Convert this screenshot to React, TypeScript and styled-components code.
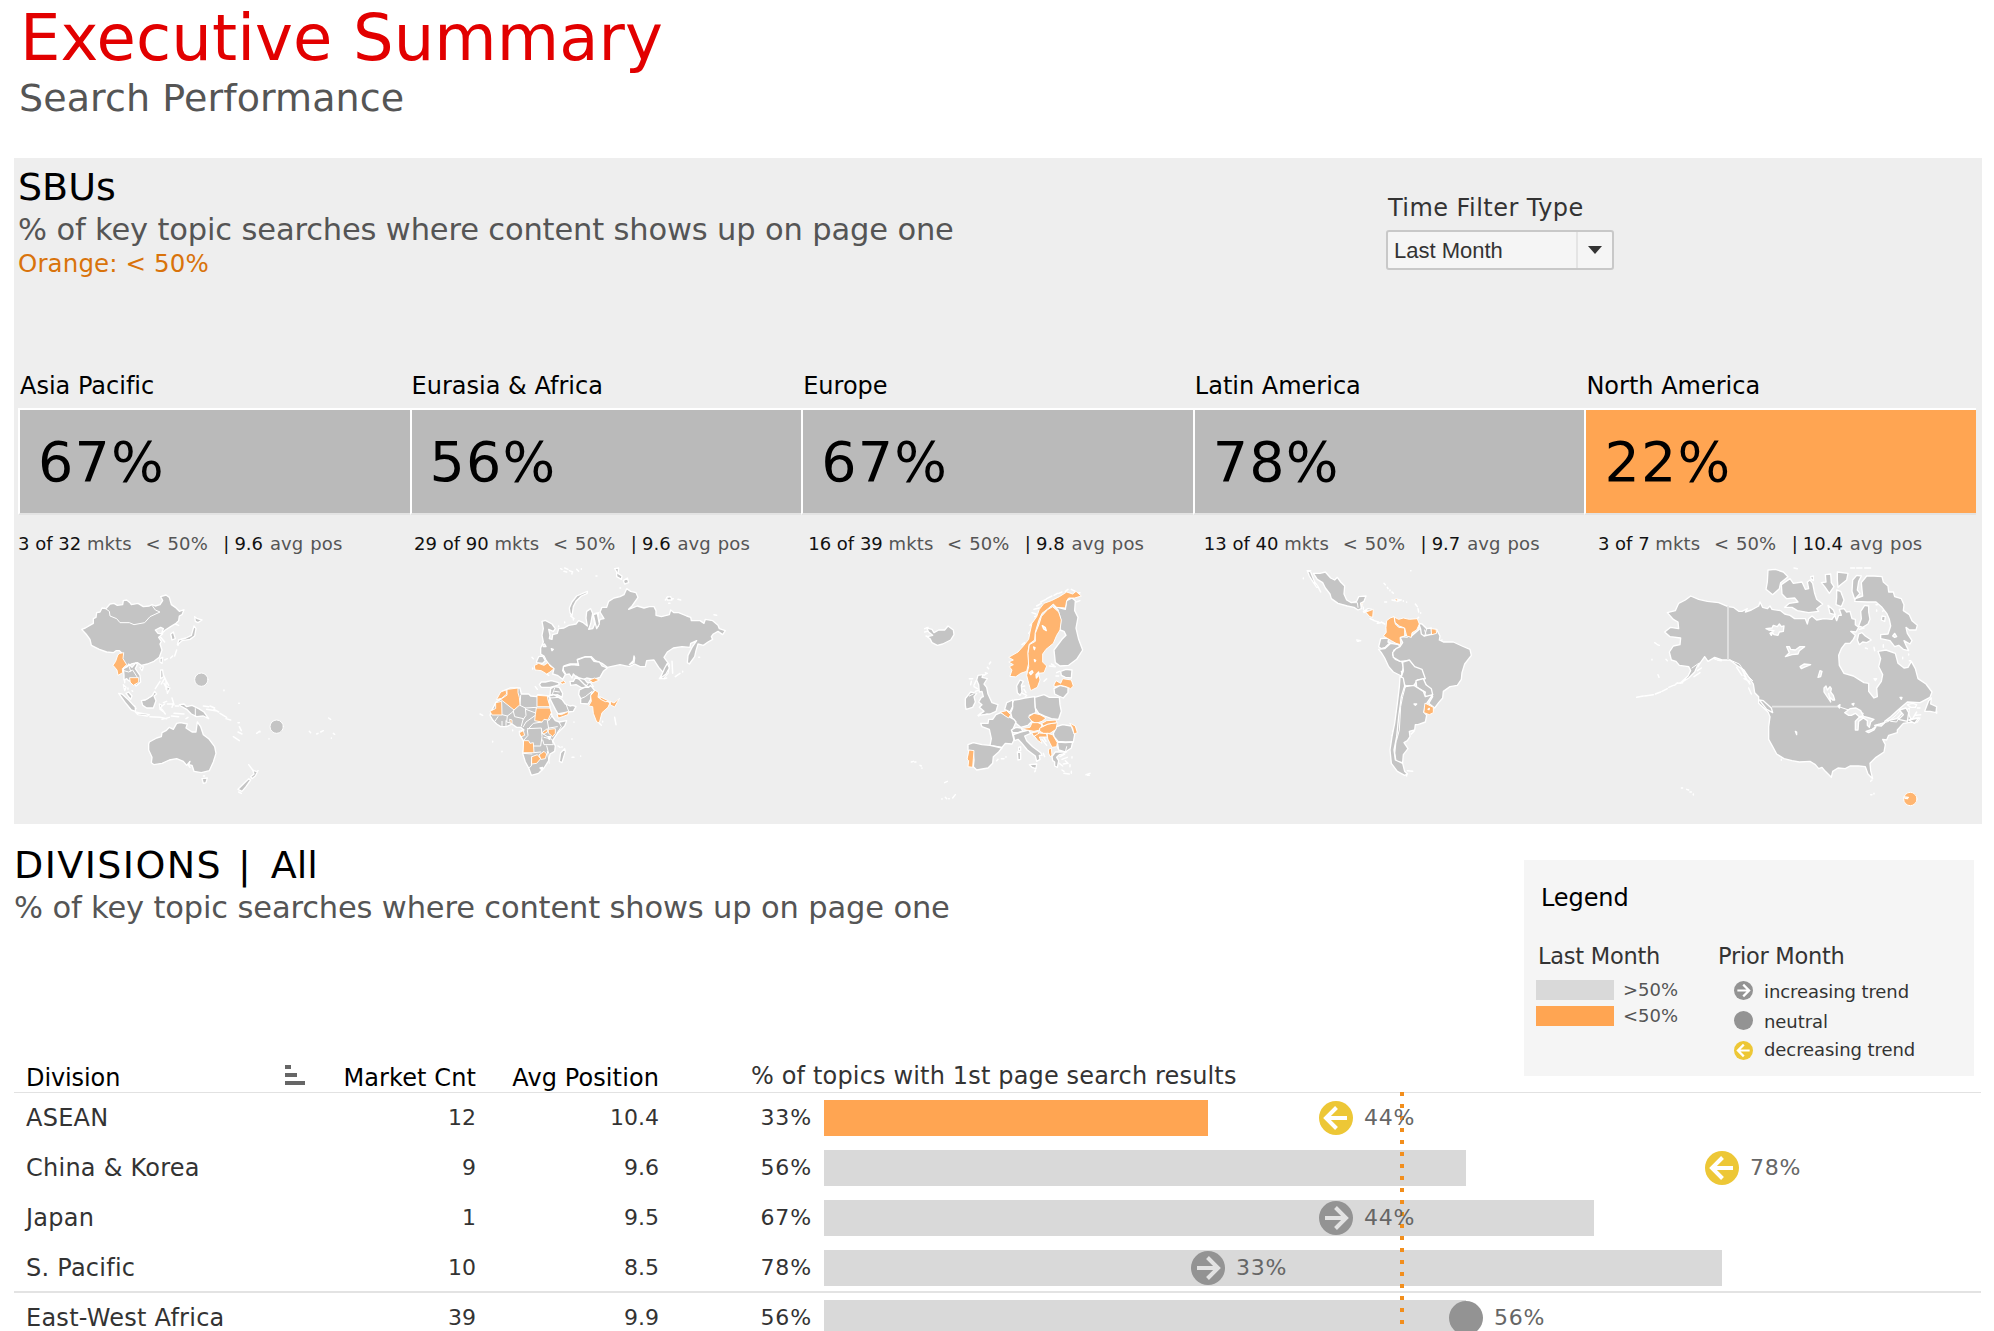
import React from "react";
import styled, { createGlobalStyle } from "styled-components";

const GlobalStyle = createGlobalStyle`
  body { margin: 0; background: #fff; overflow: hidden; }
  * { box-sizing: border-box; }
`;

const Page = styled.main`
  width: 1994px;
  height: 1331px;
  overflow: hidden;
  background: #fff;
  font-family: "DejaVu Sans", sans-serif;
  font-variant-ligatures: none;
  color: #333;
  white-space: pre;
`;

/* ---------- headings ---------- */

const PageHeader = styled.header`
  height: 158px;
  padding: 0 0 0 19px;
`;
const PageTitle = styled.h1`
  margin: 0 0 0 1px;
  font-weight: 400;
  font-size: 64px;
  line-height: 76px;
  letter-spacing: 0.1px;
  color: #e20000;
`;
const PageSubtitle = styled.p`
  margin: 0;
  font-size: 38px;
  line-height: 44px;
  letter-spacing: 0.1px;
  color: #555;
`;
const SectionTitle = styled.h2`
  margin: 0;
  font-weight: 400;
  font-size: 38px;
  line-height: 44px;
  color: #000;
`;
const TitleWord = styled.span`
  letter-spacing: 1.4px;
`;
const TitleRule = styled.span`
  letter-spacing: 3.9px;
`;
const SectionNote = styled.p`
  margin: 3px 0 0;
  font-size: 30.5px;
  line-height: 36px;
  letter-spacing: -0.15px;
  color: #555;
`;
const ThresholdNote = styled.p`
  margin: 1px 0 0;
  font-size: 24.5px;
  line-height: 30px;
  letter-spacing: 0.12px;
  color: #d9730b;
`;

/* ---------- SBU panel ---------- */

const SbuPanel = styled.section`
  width: 1968px;
  height: 666px;
  margin-left: 14px;
  background: #eee;
`;
const SbuHead = styled.div`
  display: flex;
  justify-content: space-between;
  height: 213px;
  padding: 7px 368px 0 4px;
`;
const Filter = styled.div`
  width: 228px;
  padding-top: 28px;
`;
const FilterLabel = styled.div`
  padding-left: 2px;
  font-size: 24px;
  line-height: 30px;
  letter-spacing: 0.45px;
`;
const Select = styled.button`
  display: flex;
  align-items: stretch;
  width: 228px;
  height: 40px;
  margin-top: 7px;
  padding: 0;
  border: 2px solid #c8c8c8;
  border-radius: 3px;
  background: #f5f5f5;
  color: #333;
  font: 22px/37px "Liberation Sans", Arial, sans-serif;
`;
const SelectValue = styled.span`
  flex: 1;
  padding-left: 6px;
  text-align: left;
`;
const SelectArrow = styled.span`
  display: flex;
  align-items: center;
  justify-content: center;
  width: 36px;
  border-left: 2px solid #e4e4e4;
`;
const SbuGrid = styled.div`
  display: grid;
  grid-template-columns: repeat(5, 1fr);
  width: 1958px;
  margin-left: 4px;
`;
const SbuName = styled.div`
  padding-left: 2px;
  font-size: 24px;
  line-height: 30px;
  height: 37px;
  color: #000;
`;
const SbuScore = styled.div<{ $low?: boolean }>`
  height: 107px;
  padding-left: 18px;
  border-top: 2px solid #fff;
  border-left: 2px solid #fff;
  border-bottom: 2px solid #e3e3e3;
  background: ${(p) => (p.$low ? "#ffa552" : "#bababa")};
  color: #000;
  font-size: 55.5px;
  line-height: 104px;
  letter-spacing: 1.2px;
`;
const SbuStats = styled.div<{ $indent: number }>`
  height: 41px;
  padding: 17px 0 0 ${(p) => p.$indent}px;
  font-size: 18px;
  line-height: 24px;
  color: #111;
`;
const Muted = styled.span`
  color: #555;
  letter-spacing: 0.12px;
  word-spacing: 1px;
`;
const StatRule = styled.span`
  word-spacing: -0.6px;
`;
const MapSlot = styled.div<{ $x: number; $y: number }>`
  height: 268px;
  padding: ${(p) => p.$y}px 0 0 ${(p) => p.$x}px;
`;

/* ---------- maps ---------- */

type MapData = {
  width: number;
  top: number;
  height: number;
  land: string[];
  low: string[];
  borders?: string;
  softBorders?: string;
  water?: string[];
  islets?: string;
  dots?: { x: number; y: number; low?: boolean }[];
};

const MapSvg = styled.svg`
  display: block;
  stroke-linejoin: round;
  stroke-linecap: round;
`;

const RegionMap = ({ map }: { map: MapData }) => (
  <MapSvg
    width={map.width / 3}
    height={map.height / 3}
    viewBox={`0 ${map.top} ${map.width} ${map.height}`}
  >
    <path d={map.islets} fill="none" stroke="#fff" strokeWidth="4.4" />
    <g fill="#c4c4c4" stroke="#fff" strokeWidth="4">
      {map.land.map((p, i) => (
        <polygon key={i} points={p} />
      ))}
    </g>
    <path d={map.borders} fill="none" stroke="#fff" strokeWidth="3" />
    <path d={map.softBorders} fill="none" stroke="#e4e4e4" strokeWidth="5" strokeLinecap="butt" />
    <g fill="#ffb570" stroke="#fff" strokeWidth="2.8">
      {map.low.map((p, i) => (
        <polygon key={i} points={p} />
      ))}
    </g>
    <g fill="#eee" stroke="#fff" strokeWidth="4">
      {(map.water || []).map((p, i) => (
        <polygon key={i} points={p} />
      ))}
    </g>
    {(map.dots || []).map((d, i) => (
      <circle key={i} cx={d.x} cy={d.y} r="20" fill={d.low ? "#ffb570" : "#c4c4c4"} stroke="#fff" strokeWidth="3" />
    ))}
    {(map.dots || []).filter((d) => d.low).map((d, i) => (
      <path key={i} d={`M${d.x - 18},${d.y - 6} l12,1 M${d.x - 16},${d.y - 2} l8,1`} stroke="#fff" strokeWidth="4" />
    ))}
  </MapSvg>
);

const asia: MapData = {
  width: 900,
  top: 0,
  height: 750,
  land: [
    "65,208 76,204 88,197 100,190 100,176 108,172 110,158 120,156 126,144 138,146 150,132 162,130 172,136 188,134 190,122 200,120 210,128 214,134 234,130 250,140 268,138 276,134 286,138 300,134 308,122 302,110 318,105 328,112 334,134 346,142 358,154 372,149 366,164 358,168 356,182 348,190 332,200 316,210 304,222 310,206 302,202 286,210 294,220 308,222 296,232 304,244 300,252 306,270 298,292 282,304 262,312 244,316 232,308 214,312 200,320 192,310 186,296 188,282 178,272 168,272 160,278 140,276 118,268 94,256 90,238 78,222",
    "190,326 202,320 206,312 216,322 228,308 232,314 226,326 240,346 242,366 228,378 222,366 206,362 200,356 192,360 192,346",
    "198,400 206,396 216,408 212,418",
    "176,400 186,402 206,420 226,442 226,454 214,450 196,428",
    "244,422 256,420 276,408 284,394 290,402 282,408 288,422 280,444 260,444 248,436",
    "226,456 246,460 268,464 262,468 234,464",
    "298,432 306,436 302,444 308,454 300,448",
    "358,434 372,432 380,440 396,436 416,446 432,456 446,476 430,468 410,470 394,462 380,448 362,438",
    "266,552 268,546 290,534 304,530 306,518 318,512 328,502 340,508 350,490 362,488 382,492 378,504 396,516 408,516 412,486 422,500 430,524 446,536 464,560 468,580 460,606 448,632 424,638 402,634 396,616 386,614 390,604 380,616 370,604 350,596 328,600 306,610 282,614 274,608 276,592 266,570",
    "426,656 442,654 438,668 430,670",
    "578,630 592,636 586,648 576,656 572,650 582,642",
    "566,656 572,660 558,680 546,694 534,688",
    "404,170 412,176 426,180 414,188 406,184",
    "402,198 408,206 404,228 390,238 366,242 352,254 356,240 378,234 394,226",
    "332,222 340,216 346,236 336,240",
    "300,296 308,292 306,310 300,306",
    "302,330 308,330 310,350 302,356",
    "320,380 330,384 322,400",
    "240,322 250,320 246,332",
    "190,374 198,382 194,392",
  ],
  low: [
    "180,280 191,278 189,296 200,314 187,326 188,338 174,346 171,330 159,316 167,304 173,286",
    "210,353 236,353 236,367 220,376 211,367",
  ],
  borders:
    "M134,144 L148,154 150,168 170,176 180,188 208,188 222,194 254,188 270,170 300,156 286,150 276,136 M406,446 V470 M192,332 L206,336 218,330 232,352 M206,316 L212,334 M244,422 L260,418 280,404",
  islets:
    "M302,232 l12,14 M346,192 l10,4 M354,256 l2,-6 M350,270 l-6,18 M338,288 l-6,6 M322,296 l-8,4 M308,340 l10,22 8,14 M300,364 l-14,22 M312,358 l-8,14 M318,362 v26 M312,370 l8,16 M310,428 l10,-4 M306,448 l10,14 M314,432 l-8,6 M336,414 l6,20 M322,432 h16 M338,436 l-2,6 M346,438 h10 M270,470 l30,2 20,4 M306,478 l22,-6 M334,468 l22,2 M342,460 l30,2 M378,476 l6,-4 M430,438 l16,2 M440,448 l26,4 M450,438 l14,6 M462,448 l14,8 M480,460 l20,12 M498,476 l14,4 M534,488 h4 M538,500 l6,12 M534,516 l12,6 M520,530 l18,12 M590,520 l8,-6 M600,514 v2 M627,536 v1 M492,390 v2 M536,430 h2 M748,514 l4,4 M770,522 l4,-2 M782,516 l8,-4 M806,474 l6,4 M820,520 l4,3 M814,534 v1 M566,614 l12,16 M594,632 l-6,8 M536,696 l8,4 M194,350 v18 M204,384 v4 M216,392 l2,2 M228,446 l-4,-8 M384,614 l6,8 M430,648 h4",
  dots: [
    { x: 424, y: 359 },
    { x: 650, y: 500 },
  ],
};

const eurasia: MapData = {
  width: 840,
  top: 18,
  height: 732,
  land: [
    "216,214 226,211 246,222 256,236 250,244 236,238 240,256 238,266 246,268 248,254 262,250 266,236 282,234 296,226 318,222 326,212 340,218 352,228 348,204 350,184 362,176 368,190 362,222 356,238 368,236 374,222 370,200 374,190 386,188 382,208 384,230 390,208 402,206 390,186 396,172 410,172 416,154 432,144 450,140 462,134 470,116 482,124 498,128 504,142 486,168 476,178 502,168 522,174 538,170 552,170 558,182 558,196 574,200 598,194 602,180 612,188 626,188 650,198 662,202 664,212 690,212 702,220 706,208 728,212 744,226 748,236 766,242 758,254 744,244 730,252 724,260 728,268 714,276 700,286 684,282 678,302 674,320 658,342 652,338 654,316 666,292 680,272 662,280 660,292 636,290 610,294 592,306 582,322 598,344 594,370 580,386 568,386 580,368 566,352 552,330 530,332 526,350 510,350 494,342 478,350 450,344 412,352 396,340 376,332 364,320 346,320 322,328 326,342 300,342 282,348 278,362 286,374 278,388 262,376 248,372 252,356 236,342 228,330 222,318 212,312 212,294 220,276 216,256 220,236",
    "300,188 298,174 306,156 320,138 338,130 352,124 352,130 334,138 318,154 310,170 306,198",
    "280,350 306,344 326,346 322,330 346,321 362,321 372,334 388,336 396,348 412,354 400,364 390,382 370,388 350,384 336,390 318,380 310,372 306,384 298,372 288,374 280,360",
    "200,334 206,320 218,318 226,332 218,340 200,338",
    "208,404 214,396 226,396 244,392 266,398 268,404 256,408 240,412 214,412",
    "242,416 252,410 268,412 278,430 276,442 262,434 250,436 240,434",
    "236,438 252,434 276,448 286,462 300,468 308,466 318,470 310,484 294,486 264,492 256,478",
    "300,394 310,394 316,384 334,388 350,402 356,410 336,414 318,404 302,406",
    "318,378 328,384 344,388 352,398 362,398 370,410 356,412 344,404",
    "328,420 344,412 356,412 362,406 374,422 364,430 362,448 354,462 332,460 332,446 326,434",
    "150,414 154,432 176,432 182,438 200,440 204,434 234,438 240,444 236,456 242,480 246,498 256,512 268,516 290,512 284,528 262,550 254,562 248,572 256,588 254,604 240,612 236,632 222,654 206,670 184,676 176,654 166,636 158,610 162,592 160,572 150,556 148,544 162,540 152,532 140,532 126,522 110,530 92,530 80,522 68,510 60,496 64,484 78,456 92,448 84,444 96,424 120,414",
    "284,596 286,604 276,638 268,634 272,608",
    "434,56 446,54 444,70 456,78 454,88 440,80 440,66",
    "460,92 472,84 476,98 464,102",
    "590,142 602,140 606,150 592,150",
    "370,194 382,190 388,222 380,236 376,220",
    "570,386 584,354 592,340 598,354 588,372",
  ],
  low: [
    "194,346 206,340 222,346 234,338 240,348 252,356 240,366 230,372 214,362 196,360",
    "112,418 144,414 144,428 148,442 150,464 132,480 92,448 110,436",
    "80,448 92,426 108,420 110,432 96,444",
    "78,458 95,454 96,495 66,495 60,484 76,476",
    "202,436 232,438 234,450 240,470 202,470",
    "200,474 240,474 244,488 234,510 222,508 216,516 194,512 196,494",
    "262,492 274,494 296,484 294,494 266,504",
    "148,548 160,542 164,556 154,560",
    "236,538 256,536 256,550 248,560 236,550",
    "218,546 232,536 232,546 222,552",
    "162,572 176,572 180,580 190,578 192,608 160,608",
    "186,620 202,614 212,626 200,640 186,642",
    "208,614 222,604 230,612 226,626 214,628",
    "120,508 126,510 126,520 122,520",
    "358,390 374,384 388,390 370,398",
    "270,398 280,392 288,398 278,402",
    "376,421 386,428 384,442 400,450 420,458 414,472 396,488 388,518 380,516 370,490 368,470 356,468 364,454 362,438",
    "390,440 402,446 418,454 406,455 392,448",
    "422,454 432,459 449,445 441,458 434,471 422,465",
  ],
  borders:
    "M152,436 L150,466 166,474 200,472 M166,474 L168,496 160,508 M132,480 L146,466 M96,494 L112,498 128,486 132,480 M130,484 L134,500 160,506 154,528 M112,498 L110,516 126,520 M196,496 L168,516 160,530 M246,498 L236,512 M216,516 L190,520 172,540 174,556 162,570 M172,536 L214,534 216,560 212,588 188,588 M216,550 L236,562 M222,562 L246,568 250,584 222,584 218,570 M192,608 L212,606 M230,588 L236,610 M186,620 L184,648 176,654 M158,610 L186,612 M232,512 L236,536 M266,514 L274,530 262,548 M238,534 L262,530 M168,478 l26,10 M84,500 L76,512 M96,514 V530 M108,512 V528 M254,414 l-8,22 M254,424 L268,426 M288,462 L296,484 M240,444 L268,442 M366,424 L346,440 332,446 M346,412 L356,398 M232,604 L238,640",
  water: ["478,344 490,332 492,318 494,324 492,338", "210,654 218,652 216,660", "234,560 242,560 238,568", "244,296 250,298 246,302", "218,284 224,282 228,290 220,290"],
  islets:
    "M272,56 l4,2 M284,54 l10,4 M282,64 l8,2 M298,62 l10,4 M306,70 v2 M320,58 l6,6 M334,56 v2 M378,78 h3 M450,114 h2 M586,150 l8,-10 M602,146 h8 M624,148 l8,2 M596,160 h4 M732,194 l8,2 M686,322 h3 M606,334 l2,36 M616,380 l14,-10 M638,364 v2 M266,228 v2 M284,216 v2 M310,208 v2 M186,322 l4,4 M188,354 v3 M230,372 l6,4 M196,410 l6,8 M30,492 l8,4 M68,574 v2 M96,604 v1 M128,540 v2 M306,566 v2 M264,588 l6,4 M276,590 v2 M306,622 h6 M332,618 v1 M434,502 l4,22 M388,520 l6,6 M398,514 v2 M312,516 v1 M668,276 l14,-4 M302,198 l10,8 M582,386 l8,-2",
};

const europe: MapData = {
  width: 570,
  top: 0,
  height: 750,
  land: [
    "66,218 60,206 52,200 68,196 56,186 50,174 66,178 72,188 86,180 104,180 114,168 130,180 132,194 122,210 98,222 82,226",
    "430,104 444,112 466,118 470,92 486,84 496,92 494,122 504,142 498,174 506,208 518,240 500,268 476,286 450,288 436,278 432,240 456,208 468,196 462,184 450,180 452,150 444,120",
    "204,316 220,314 216,322 232,326 222,342 230,352 234,372 246,398 264,404 258,424 240,432 204,436 222,424 208,412 216,404 206,396 214,382 220,380 216,364 208,366 206,344 200,330",
    "166,386 182,366 200,370 192,380 196,396 188,412 168,418 166,406",
    "452,304 468,298 486,300 484,324 466,322 454,316",
    "432,356 450,346 474,352 474,368 460,384 446,378 434,372",
    "320,348 330,330 340,334 334,346 336,366 330,376 322,368",
    "306,400 312,390 328,388 344,384 374,380 376,412 378,428 358,436 366,454 354,466 332,472 318,460 306,444 302,428 308,414",
    "374,382 402,374 418,382 448,382 450,404 454,424 446,448 424,446 404,438 386,430 376,414",
    "284,418 290,398 308,390 308,410 300,426",
    "212,460 234,460 236,448 248,448 258,434 272,428 290,436 312,448 318,456 312,470 306,484 308,494 312,510 306,522 286,520 276,532 240,526 244,506 238,478 216,470",
    "174,524 190,518 216,524 240,526 276,534 266,546 250,560 248,580 234,594 200,600 190,590 192,570 190,546 174,540",
    "304,480 318,472 334,474 338,484 324,488 308,488",
    "310,494 332,486 356,480 362,490 344,498 350,512 368,530 392,548 396,556 388,556 390,568 380,574 376,558 352,540 334,518 324,508 314,512",
    "358,584 380,582 378,596 366,592",
    "322,546 332,548 332,568 324,570",
    "326,532 332,530 332,542 326,542",
    "430,490 440,470 458,464 484,468 494,494 490,516 466,516 444,514 432,500",
    "442,516 466,518 488,516 484,534 466,546 446,540",
    "426,560 436,546 470,546 458,552 448,554 440,562 446,572 442,592 434,588 434,576 428,572",
  ],
  low: [
    "300,318 306,300 298,290 310,284 296,276 310,270 296,262 324,246 340,228 356,208 360,186 366,160 380,140 388,118 402,100 424,92 448,80 470,66 488,72 498,64 514,78 494,84 476,84 470,92 466,114 440,112 430,102 414,116 396,130 386,152 376,186 374,210 358,222 354,244 356,280 350,304 332,310 318,320",
    "414,118 428,110 446,126 454,150 450,180 440,196 430,220 408,238 398,252 398,276 410,288 402,308 386,310 390,330 382,352 362,362 356,340 350,316 356,290 354,250 358,224 376,214 376,190 388,160 394,140",
    "432,344 438,332 452,340 458,326 484,330 490,348 482,356 468,350 452,346 434,350",
    "272,426 290,422 302,434 296,444 286,438",
    "356,440 372,430 390,434 408,444 396,454 378,460 366,454",
    "334,476 360,472 366,458 384,458 396,464 390,480 372,484 350,480",
    "390,474 414,462 442,458 438,478 420,490 400,490 390,484",
    "396,460 410,452 438,450 440,458 414,462 400,468",
    "366,488 386,485 386,497 372,499",
    "374,498 388,489 410,491 412,501 388,501 396,520 384,512",
    "412,490 428,494 442,518 440,530 426,532 420,520 414,508",
    "416,538 424,534 426,556 420,560 416,550",
    "480,460 496,468 502,488 492,492 488,474",
    "178,540 192,542 190,566 188,592 174,590 176,572 172,568",
  ],
  water: ["358,308 366,302 369,307 362,314", "378,314 386,306 384,318 379,324", "397,167 406,173 409,182 401,177", "371,231 375,233 373,239", "373,269 377,271 375,275"],
  borders: "M228,432 h6 M466,546 L470,530 M446,540 L440,528 M190,372 l-12,6",
  islets:
    "M44,176 l10,-4 M44,186 l8,-2 M48,198 l10,4 M366,128 l12,4 M372,118 l16,-4 M380,108 l14,-8 M392,96 l16,-8 M410,86 l16,-8 M432,76 l10,-6 M446,70 l10,-4 M466,64 l8,-6 M484,58 l12,6 M502,70 l8,-2 M498,96 l12,-4 M374,140 l10,-4 M360,166 l6,-6 M356,190 l6,-6 M336,224 l8,-6 M238,282 l4,-6 M232,292 l4,4 M226,308 l6,2 M222,316 l8,-6 M188,326 l-10,0 M198,332 l-6,14 M192,350 l10,6 M196,364 l12,-4 M184,334 l-2,10 M206,438 l6,-8 M402,334 l8,-8 M418,288 l18,2 M424,282 l8,4 M438,318 h8 M440,308 l8,-4 M342,358 l6,10 M338,370 l12,6 M346,380 l8,4 M332,350 l12,-2 M404,560 l-4,-10 M376,600 v4 M260,572 l4,-4 M274,566 h8 M288,560 v2 M450,560 l14,-8 M456,568 l16,-6 M448,580 l10,8 M460,582 l14,-2 M466,572 l8,8 M480,584 v6 M456,600 l6,4 M462,610 l16,2 M484,604 v6 M486,560 v4 M528,614 l12,-4 M532,616 h6 M4,576 l6,-2 M14,576 h4 M30,586 l4,2 M36,594 v1 M104,638 l8,-4 M96,686 v2 M106,682 l4,4 M116,686 h2 M128,684 l8,-10 M400,500 l8,14 M396,508 l14,18 M374,604 v1",
};

const latin: MapData = {
  width: 660,
  top: 18,
  height: 732,
  land: [
    "70,70 90,70 106,66 122,84 134,90 142,82 152,96 164,108 162,132 170,150 184,158 200,154 206,140 228,138 222,154 212,160 214,176 204,180 192,172 172,168 144,160 124,146 120,132 106,114 98,98 82,88",
    "52,62 62,66 74,96 86,112 80,112 68,94 58,78",
    "220,184 234,176 246,178 244,184 230,182 222,188",
    "272,266 296,264 294,276 300,278 286,292 274,296 266,290",
    "266,298 284,296 302,280 326,284 330,292 312,300 308,314 316,328 336,336 340,352 334,378 310,366 296,350 284,324 274,308",
    "330,290 338,278 330,262 350,256 362,260 388,238 386,232 396,224 408,234 410,246 424,252 430,238 440,238 450,258 448,270 460,276 490,276 516,288 540,298 544,316 524,342 516,368 514,388 502,406 480,410 460,424 458,444 446,458 434,474 416,460 428,440 416,420 404,396 396,370 374,352 358,332 330,334 310,322 308,308 318,296",
    "338,336 358,330 374,350 396,358 406,386 382,390 372,406 346,408 334,380 340,362",
    "378,392 400,386 408,404 424,416 428,434 418,442 404,438 406,426 380,412",
    "346,410 372,406 400,424 406,440 428,434 410,460 402,486 410,496 406,516 384,524 376,524 374,540 358,544 360,560 352,572 342,578 354,596 340,614 338,638 318,634 314,610 318,570 322,520 328,460 336,420",
    "330,380 340,384 344,408 334,440 326,500 320,560 312,600 316,630 338,640 344,664 352,672 344,676 322,664 304,640 300,600 306,560 314,520 322,460 328,410",
    "386,220 396,222 410,236 424,234 428,252 402,258 394,252 392,238",
    "322,148 334,150 322,154",
  ],
  low: [
    "288,232 290,212 300,204 312,200 316,222 326,232 344,234 344,258 330,262 332,284 318,280 304,272 280,258 288,248",
    "314,202 326,208 340,204 358,208 382,206 388,222 380,240 366,248 364,262 350,258 344,234 328,228 316,218",
    "228,186 250,178 248,202 240,200",
    "424,236 438,238 440,250 426,254",
    "406,460 430,472 430,488 418,494 402,488",
    "214,158 218,160 216,170",
    "314,148 322,146 322,154",
  ],
  water: ["414,478 418,475 417,479", "372,462 380,462 376,466", "334,364 338,366 336,370"],
  borders:
    "M186,158 L202,158 204,172 M404,240 l4,14 M330,260 L352,262 M410,236 l-6,22 M346,410 L338,440 332,470 328,540 320,570",
  islets:
    "M52,62 l10,0 M40,84 v2 M86,114 l6,12 M240,206 l10,4 M252,212 l14,4 M262,220 l10,-2 M274,216 l10,6 M282,100 l4,4 M292,112 l2,4 M300,120 v2 M306,126 l4,4 M284,156 h6 M306,150 l10,2 M340,152 v2 M350,156 v1 M362,62 h1 M376,162 l6,8 M384,176 l2,10 M392,188 v2 M382,206 l4,-4 M200,270 l12,2 M202,274 l4,0 M308,544 l8,8 M306,556 l12,6 M304,576 l12,8 M310,590 v14 M364,552 l8,-8 M344,668 l8,4 M352,662 l16,2 M350,676 v2 M450,276 l6,-6 M404,466 l-4,6 M310,202 v6 M220,172 v6",
};

const north: MapData = {
  width: 1020,
  top: 18,
  height: 792,
  land: [
    "142,188 166,182 176,160 196,150 212,138 236,148 262,154 296,158 324,170 340,172 356,184 366,184 382,176 376,186 394,180 416,168 420,156 428,172 442,176 450,168 456,178 482,182 494,192 510,196 524,206 556,206 562,222 566,206 576,198 590,210 612,206 636,208 644,196 650,212 656,196 664,196 658,178 672,176 680,186 690,184 696,206 706,208 706,224 716,232 708,246 692,244 706,256 700,268 690,280 676,280 664,296 656,316 658,346 672,370 700,378 732,398 746,400 746,424 762,444 772,440 770,414 784,394 788,374 776,350 782,326 774,304 798,300 826,310 834,340 852,354 864,352 874,334 886,356 894,386 918,402 936,426 930,442 900,458 862,456 834,480 812,500 794,514 830,506 850,486 868,474 866,492 872,506 900,504 892,516 864,518 850,520 832,540 832,548 806,556 800,570 788,568 796,584 792,606 768,622 750,640 752,662 758,686 744,672 736,650 716,648 690,648 676,656 654,654 638,664 634,682 616,664 606,652 596,656 586,644 570,634 538,636 516,632 492,626 470,612 458,590 446,568 446,530 450,500 444,486 416,460 416,440 404,428 400,402 388,384 372,360 350,346 330,330 306,330 284,322 264,334 254,320 244,334 232,348 224,366 206,384 180,400 204,378 212,362 206,350 178,346 168,334 154,330 148,306 160,288 180,284 182,264 150,260 134,246 152,232 176,236 174,216 160,208",
    "444,60 466,58 490,66 504,80 482,98 478,116 458,134 438,118 442,96",
    "484,104 510,86 520,100 546,96 556,118 566,116 562,96 570,90 578,100 584,130 590,148 608,162 590,176 596,184 566,188 532,182 516,172 494,172 508,160 534,156 524,144 500,146 486,132",
    "572,80 580,78 580,92 574,88",
    "616,74 632,72 634,98 642,110 628,130 614,110 604,98 618,96",
    "652,66 684,70 680,90 662,104 654,112 652,90",
    "650,120 662,124 672,150 664,170 648,164 650,142",
    "624,166 640,180 646,194 630,190",
    "698,90 710,76 724,78 716,94 712,120 720,130 704,148 696,124",
    "724,98 740,78 762,78 786,80 790,96 804,108 806,126 820,126 824,140 844,146 852,164 850,182 868,194 876,212 892,226 888,240 868,240 858,232 862,250 876,272 870,282 852,272 860,290 866,302 850,298 836,286 824,290 810,272 782,266 782,254 804,252 812,228 808,208 800,190 786,172 768,156 742,156 704,154 706,146 728,138 726,120",
    "734,166 746,168 746,186 750,208 744,222 728,232 716,228 724,206 722,184",
    "716,252 726,248 736,258 754,270 740,278 728,276 718,284 712,270",
    "418,450 430,452 454,474 458,488 440,478",
    "914,484 926,452 934,444 932,462 950,470 948,488 930,484",
    "838,480 858,474 866,488 862,514 836,508 850,494",
    "866,510 896,504 884,520",
    "786,198 796,200 794,214 784,210",
  ],
  low: [],
  softBorders: "M324,168 V330 M456,470 H656",
  borders: "M656,470 L686,480 M694,478 L730,490 M764,528 L806,514 830,494 838,484 M812,514 l18,2 8,-16 M330,330 l28,12 20,30 20,20 M236,340 l-20,14",
  water: [
    "438,236 456,234 460,226 472,230 478,222 484,230 492,228 490,244 478,246 474,256 462,254 458,248 454,256 450,250 462,242 446,240",
    "500,290 508,290 512,298 526,300 540,290 554,290 538,302 534,312 516,314 496,320 508,308",
    "540,350 552,342 572,344 552,352 544,356",
    "600,362 606,364 602,380 594,382",
    "612,414 618,408 622,420 630,410 634,416 632,426 640,436 644,450 638,450 628,440 626,430 632,456 620,438 612,426",
    "674,488 690,476 708,474 722,482 730,498 718,500 706,490 694,496 686,496",
    "706,540 706,514 718,502 734,500 748,504 762,508 752,516 748,532 742,526 742,512 730,504 716,514 714,540",
    "738,544 756,538 768,530 762,540 746,548",
    "764,526 780,522 794,518 784,528",
    "526,544 530,546 530,554",
    "696,462 702,460 700,466",
    "654,468 660,464 658,474",
    "840,442 846,442 844,448",
    "818,258 824,250 830,260 824,262",
    "762,386 770,386 766,392",
    "862,464 878,460 890,464 886,472 872,472",
  ],
  islets:
    "M104,278 l6,4 M112,284 l6,2 M96,328 v2 M114,374 l3,8 M138,328 l4,4 M50,442 l20,-4 M74,438 l26,-4 M106,432 l16,-6 M126,424 l16,-8 M146,412 l14,-6 M164,406 l8,-8 M172,400 l16,-2 M222,380 l18,-12 M232,362 l12,-8 M234,350 l10,-20 M274,322 l14,6 M292,330 l12,2 M350,352 l16,24 M362,350 l16,32 M372,376 l18,26 M380,360 l12,24 M366,346 l20,34 M386,414 l8,18 M372,386 l16,8 M400,390 v10 M522,54 l10,2 M692,54 h12 M710,54 h16 M734,54 h18 M184,714 h4 M200,718 l6,2 M210,726 l4,0 M220,732 v3 M752,734 h4 M762,730 v2 M752,694 l4,-4 M736,294 l6,2 M762,292 l2,10 M790,284 v8 M768,164 h4 M770,180 v4 M788,184 l4,-4 M866,312 v3 M848,322 v4 M868,332 h4 M892,474 h8 M888,496 l14,-2 M918,414 l-14,6 M950,490 v-6 M718,238 l14,-4 M820,520 l14,-12 M792,578 l-6,22 M880,502 l10,-16 M484,628 v3",
  dots: [{ x: 871, y: 747, low: true }],
};

/* ---------- divisions ---------- */

const DivisionsHead = styled.section`
  display: flex;
  justify-content: space-between;
  align-items: flex-start;
  height: 236px;
  padding: 19px 20px 0 14px;
`;
const LegendBox = styled.aside`
  width: 450px;
  height: 216px;
  margin-top: 17px;
  padding: 23px 0 0 12px;
  background: #f5f5f5;
`;
const LegendTitle = styled.div`
  padding-left: 5px;
  font-size: 24px;
  line-height: 30px;
  letter-spacing: -0.1px;
  color: #000;
`;
const LegendColumns = styled.div`
  display: grid;
  grid-template-columns: 180px 1fr;
  margin-top: 28px;
`;
const LegendHeading = styled.div`
  padding-left: 2px;
  font-size: 22.5px;
  line-height: 30px;
  letter-spacing: -0.25px;
`;
const SwatchList = styled.div`
  padding-top: 9px;
`;
const SwatchRow = styled.div`
  display: flex;
  align-items: flex-start;
  gap: 9px;
  height: 26px;
  line-height: 19px;
  font-size: 18px;
  color: #555;
`;
const Swatch = styled.i<{ $low?: boolean }>`
  width: 78px;
  height: 20px;
  background: ${(p) => (p.$low ? "#ffa552" : "#d9d9d9")};
`;
const TrendList = styled.div`
  padding-top: 4px;
`;
const TrendRow = styled.div`
  display: flex;
  align-items: center;
  gap: 11px;
  height: 30px;
  padding-left: 18px;
  font-size: 18px;
  color: #333;
  letter-spacing: -0.08px;
`;
const TrendText = styled.span<{ $nudge: number }>`
  margin-top: ${(p) => p.$nudge}px;
`;

const columns = `
  display: grid;
  grid-template-columns: 291px 171px 183px 165px 1fr;
`;
const TableHead = styled.div`
  ${columns}
  width: 1967px;
  height: 33px;
  margin-left: 14px;
  border-bottom: 1px solid #e2e2e2;
  font-size: 24px;
  line-height: 36px;
  color: #000;
`;
const HeadDivision = styled.div`
  display: flex;
  justify-content: space-between;
  padding-left: 12px;
  letter-spacing: -0.1px;
`;
const SortIcon = styled.svg`
  margin-top: 5px;
`;
const HeadNumber = styled.div`
  text-align: right;
  letter-spacing: 0.1px;
`;
const HeadTopics = styled.div`
  grid-column: span 2;
  padding-left: 92px;
  line-height: 32px;
  letter-spacing: 0.16px;
  color: #333;
`;
const TableBody = styled.div`
  position: relative;
  width: 1967px;
  margin-left: 14px;
`;
const Row = styled.div<{ $last?: boolean }>`
  ${columns}
  align-items: center;
  height: 50px;
  line-height: 50px;
  font-size: 22px;
  box-shadow: ${(p) => (p.$last ? "inset 0 -2px #e3e3e3" : "none")};
`;
const Name = styled.div`
  padding-left: 12px;
  font-size: 24px;
  letter-spacing: 0.25px;
`;
const Num = styled.div`
  text-align: right;
`;
const Share = styled.div`
  padding-right: 12px;
  text-align: right;
  letter-spacing: 0.9px;
`;
const Track = styled.div`
  position: relative;
  height: 36px;
`;
const Bar = styled.div<{ $low?: boolean }>`
  height: 36px;
  background: ${(p) => (p.$low ? "#ffa552" : "#d9d9d9")};
`;
const Marker = styled.div`
  position: absolute;
  z-index: 2;
  top: 1px;
  display: flex;
  align-items: center;
  gap: 11px;
  height: 34px;
  line-height: 34px;
  color: #666;
  letter-spacing: 0.7px;
`;
const TargetLine = styled.div`
  position: absolute;
  z-index: 1;
  top: -1px;
  left: 1386px;
  width: 4px;
  height: 240px;
  background: repeating-linear-gradient(#f28e1c 0 4px, transparent 4px 12px);
`;

type Trend = "up" | "down" | "flat";
const TrendIcon = ({ trend, size, hole = "#fff" }: { trend: Trend; size: number; hole?: string }) => (
  <svg width={size} height={size} viewBox="0 0 34 34">
    <circle cx="17" cy="17" r="17" fill={trend === "down" ? "#edc736" : "#939393"} />
    {trend !== "flat" && (
      <path
        d="M6,17 H26 M16.5,6.5 L27,17 16.5,27.5"
        transform={trend === "down" ? "rotate(180 17 17)" : undefined}
        fill="none"
        stroke={hole}
        strokeWidth="4"
      />
    )}
  </svg>
);

const sbus = [
  { name: "Asia Pacific", score: "67%", mkts: "3 of 32", pos: "9.6", indent: 0, map: asia, x: 42, y: 4 },
  { name: "Eurasia & Africa", score: "56%", mkts: "29 of 90", pos: "9.6", indent: 4.5, map: eurasia, x: 60.4, y: 0 },
  { name: "Europe", score: "67%", mkts: "16 of 39", pos: "9.8", indent: 7, map: europe, x: 108.8, y: 14 },
  { name: "Latin America", score: "78%", mkts: "13 of 40", pos: "9.7", indent: 11, map: latin, x: 97.2, y: 0 },
  { name: "North America", score: "22%", mkts: "3 of 7", pos: "10.4", indent: 13.5, map: north, x: 35.6, y: 0, low: true },
];

const rows: {
  name: string; count: string; pos: string; share: string; width: number; prior: string; at: number; trend: Trend; low?: boolean; last?: boolean;
}[] = [
  { name: "ASEAN", count: "12", pos: "10.4", share: "33%", width: 384, prior: "44%", at: 512, trend: "down", low: true },
  { name: "China & Korea", count: "9", pos: "9.6", share: "56%", width: 642, prior: "78%", at: 898, trend: "down" },
  { name: "Japan", count: "1", pos: "9.5", share: "67%", width: 770, prior: "44%", at: 512, trend: "up" },
  { name: "S. Pacific", count: "10", pos: "8.5", share: "78%", width: 898, prior: "33%", at: 384, trend: "up", last: true },
  { name: "East-West Africa", count: "39", pos: "9.9", share: "56%", width: 642, prior: "56%", at: 642, trend: "flat" },
];

export default function App() {
  return (
    <Page>
      <GlobalStyle />
      <PageHeader>
        <PageTitle>Executive Summary</PageTitle>
        <PageSubtitle>Search Performance</PageSubtitle>
      </PageHeader>

      <SbuPanel>
        <SbuHead>
          <div>
            <SectionTitle>SBUs</SectionTitle>
            <SectionNote>% of key topic searches where content shows up on page one</SectionNote>
            <ThresholdNote>Orange: &lt; 50%</ThresholdNote>
          </div>
          <Filter>
            <FilterLabel>Time Filter Type</FilterLabel>
            <Select>
              <SelectValue>Last Month</SelectValue>
              <SelectArrow>
                <svg width="14" height="8" viewBox="0 0 14 8">
                  <path d="M0,0 H14 L7,8 Z" fill="#333" />
                </svg>
              </SelectArrow>
            </Select>
          </Filter>
        </SbuHead>
        <SbuGrid>
          {sbus.map((s) => (
            <div key={s.name}>
              <SbuName>{s.name}</SbuName>
              <SbuScore $low={s.low}>{s.score}</SbuScore>
              <SbuStats $indent={s.indent}>
                {s.mkts} <Muted>{"mkts  < 50%"}</Muted>
                <StatRule>{"   | "}</StatRule>
                {s.pos}
                <Muted>{" avg pos"}</Muted>
              </SbuStats>
              <MapSlot $x={s.x} $y={s.y}>
                <RegionMap map={s.map} />
              </MapSlot>
            </div>
          ))}
        </SbuGrid>
      </SbuPanel>

      <DivisionsHead>
        <div>
          <SectionTitle>
            <TitleWord>DIVISIONS</TitleWord>
            <TitleRule>{" | "}</TitleRule>
            All
          </SectionTitle>
          <SectionNote>% of key topic searches where content shows up on page one</SectionNote>
        </div>
        <LegendBox>
          <LegendTitle>Legend</LegendTitle>
          <LegendColumns>
            <div>
              <LegendHeading>Last Month</LegendHeading>
              <SwatchList>
                <SwatchRow><Swatch />&gt;50%</SwatchRow>
                <SwatchRow><Swatch $low />&lt;50%</SwatchRow>
              </SwatchList>
            </div>
            <div>
              <LegendHeading>Prior Month</LegendHeading>
              <TrendList>
                <TrendRow><TrendIcon trend="up" size={19} /><TrendText $nudge={2}>increasing trend</TrendText></TrendRow>
                <TrendRow><TrendIcon trend="flat" size={19} /><TrendText $nudge={2}>neutral</TrendText></TrendRow>
                <TrendRow><TrendIcon trend="down" size={19} /><TrendText $nudge={-1}>decreasing trend</TrendText></TrendRow>
              </TrendList>
            </div>
          </LegendColumns>
        </LegendBox>
      </DivisionsHead>

      <TableHead>
        <HeadDivision>
          Division
          <SortIcon width="20" height="20" viewBox="0 0 20 20">
            <path d="M0,0H6V4H0ZM0,8H12V12H0ZM0,16H20V20H0Z" fill="#666" />
          </SortIcon>
        </HeadDivision>
        <HeadNumber>Market Cnt</HeadNumber>
        <HeadNumber>Avg Position</HeadNumber>
        <HeadTopics>% of topics with 1st page search results</HeadTopics>
      </TableHead>
      <TableBody>
        <TargetLine />
        {rows.map((r) => (
          <Row key={r.name} $last={r.last}>
            <Name>{r.name}</Name>
            <Num>{r.count}</Num>
            <Num>{r.pos}</Num>
            <Share>{r.share}</Share>
            <Track>
              <Bar $low={r.low} style={{ width: r.width }} />
              <Marker style={{ left: r.at - 17 }}>
                <TrendIcon trend={r.trend} size={34} hole={r.at < r.width ? "#e2e2e2" : "#fff"} />
                {r.prior}
              </Marker>
            </Track>
          </Row>
        ))}
      </TableBody>
    </Page>
  );
}
